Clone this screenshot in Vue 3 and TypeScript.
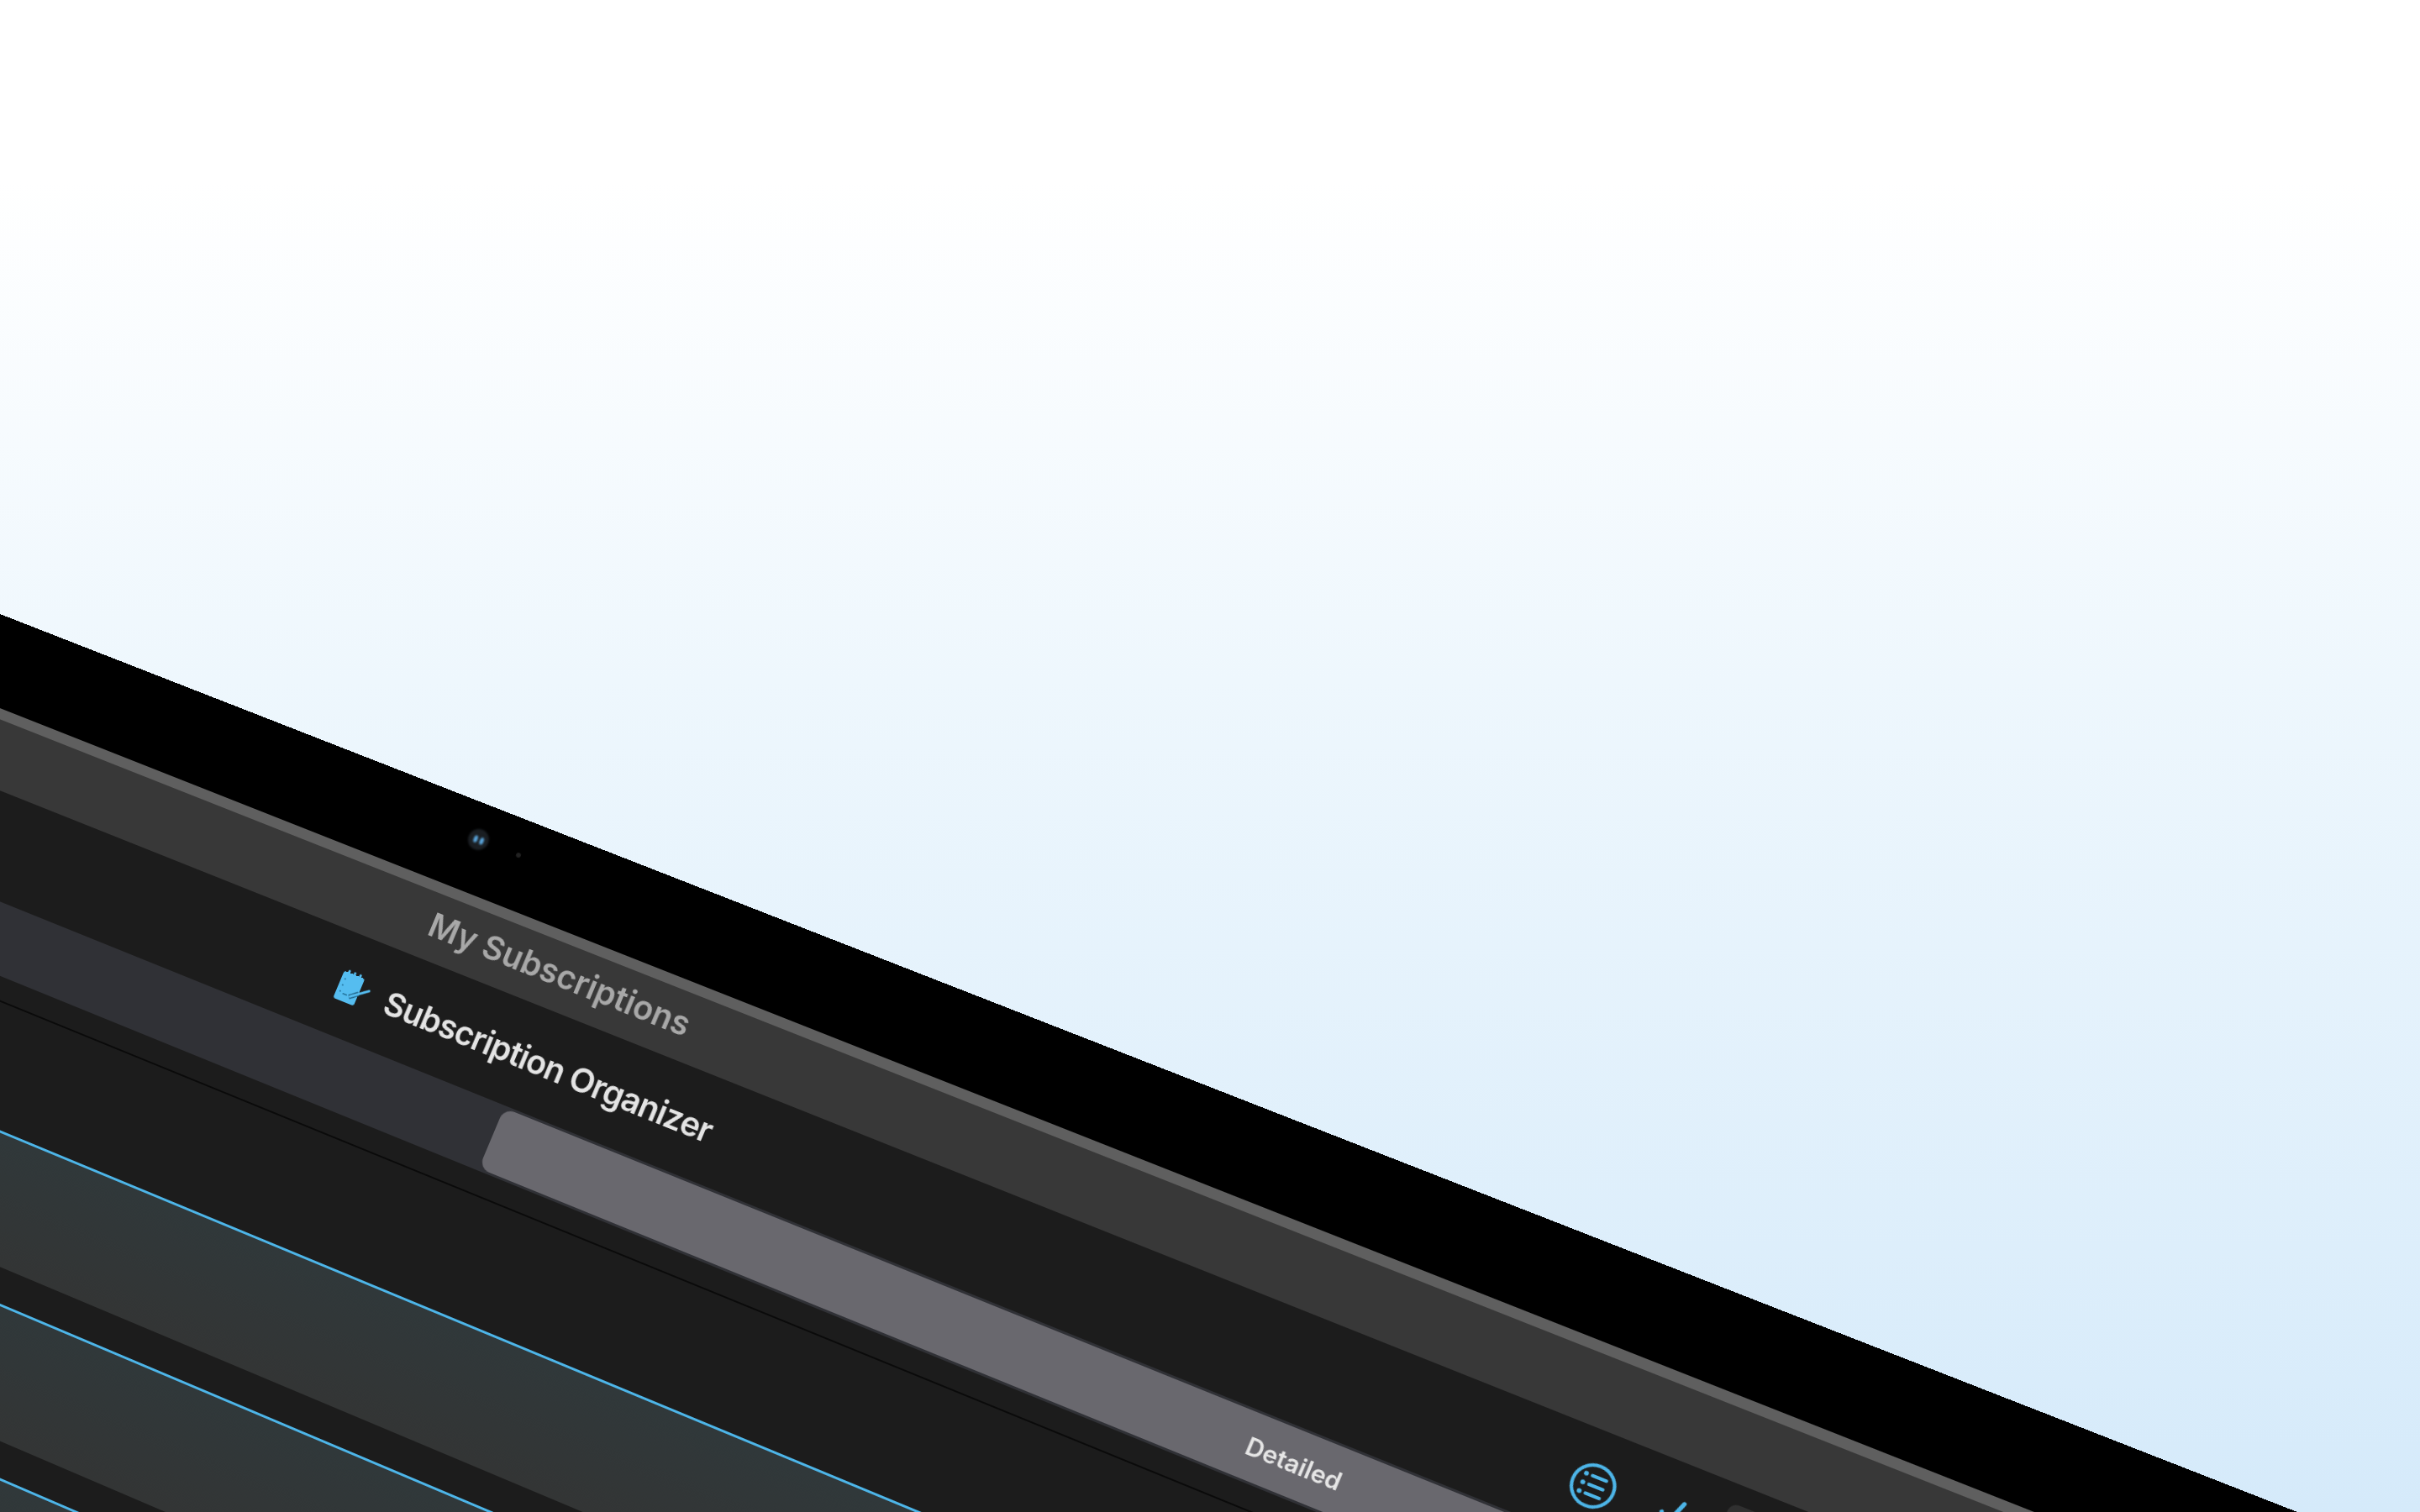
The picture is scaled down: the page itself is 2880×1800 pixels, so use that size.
<template>
  <div class="stage">
    <div class="device" :style="{ transform: deviceTransform }">
      <div class="bezel">
        <span class="camera"><i></i><i></i></span>
        <span class="sensor"></span>
      </div>
      <div class="titlebar">My Subscriptions</div>
      <header class="app-header">
        <svg class="logo" viewBox="0 0 46 46">
          <g fill="#55bdf0">
            <rect x="3" y="7" width="28" height="36" rx="3" />
            <rect x="8" y="3.5" width="3" height="6" rx="1.5" />
            <rect x="15.5" y="3.5" width="3" height="6" rx="1.5" />
            <rect x="23" y="3.5" width="3" height="6" rx="1.5" />
          </g>
          <g fill="#1f6e96">
            <circle cx="8" cy="16" r="1" />
            <circle cx="8" cy="24" r="1" />
            <circle cx="8" cy="32" r="1" />
            <rect x="12" y="33" width="6" height="1.5" />
          </g>
          <path d="M21 35l10-8" stroke="#1c5d80" stroke-width="5.5" />
          <path d="M22 34l20-15" stroke="#55bdf0" stroke-width="3" stroke-linecap="round" />
        </svg>
        <h1 class="app-name">Subscription Organizer</h1>
        <div class="actions">
          <svg class="action" viewBox="0 0 54 54" fill="none" stroke="#4db5e8" stroke-linecap="round">
            <circle cx="27" cy="27" r="24.5" stroke-width="4" />
            <path d="M22 16h17M22 27h17M22 38h17" stroke-width="4" />
            <path d="M14.5 16h.1M14.5 27h.1M14.5 38h.1" stroke-width="5.5" />
          </svg>
          <svg class="action" viewBox="0 0 54 54" fill="none" stroke="#4db5e8" stroke-linecap="round">
            <path d="M4 25l9 14L24.5 7" stroke-width="5" />
          </svg>
          <span class="action-box"></span>
        </div>
      </header>
      <div class="segments">
        <div class="segment-active">Detailed</div>
      </div>
      <div class="divider"></div>
      <div class="rows">
        <div v-for="row in rows" :key="row" class="row"></div>
      </div>
    </div>
  </div>
</template>

<script setup lang="ts">
import { computed } from 'vue'

type Point = [number, number]

const rows = [1, 2, 3, 4]

// local size of the reference rectangle and where its corners land on screen
const refW = 3436
const refH = 600
const corners: Point[] = [
  [-200, 652.8],
  [3000, 1904],
  [2754.6, 2488.3],
  [-418.5, 1173],
]

const deviceTransform = computed(() => {
  const [[x0, y0], [x1, y1], [x2, y2], [x3, y3]] = corners
  const dx1 = x1 - x2
  const dx2 = x3 - x2
  const sx = x0 - x1 + x2 - x3
  const dy1 = y1 - y2
  const dy2 = y3 - y2
  const sy = y0 - y1 + y2 - y3
  const den = dx1 * dy2 - dx2 * dy1
  const g = (sx * dy2 - dx2 * sy) / den
  const h = (dx1 * sy - sx * dy1) / den
  const a = x1 - x0 + g * x1
  const b = x3 - x0 + h * x3
  const d = y1 - y0 + g * y1
  const e = y3 - y0 + h * y3
  const m = [a / refW, d / refW, 0, g / refW, b / refH, e / refH, 0, h / refH, 0, 0, 1, 0, x0, y0, 0, 1]
  return `matrix3d(${m.join(',')})`
})
</script>

<style scoped>
.stage {
  position: relative;
  width: 2880px;
  height: 1800px;
  overflow: hidden;
  background: linear-gradient(180deg, #ffffff 12%, #eef7fd 45%, #d5eafa 100%);
  font-family: Inter, "Liberation Sans", sans-serif;
}

.device {
  position: absolute;
  left: 0;
  top: 0;
  width: 3800px;
  transform-origin: 0 0;
  background: #1c1c1c;
  display: flex;
  flex-direction: column;
}

.bezel {
  height: 123px;
  box-sizing: border-box;
  background: #000;
  border-bottom: 13px solid #5f5f5f;
  display: flex;
  align-items: center;
  padding: 0 0 22px 907px;
}

.camera {
  width: 26px;
  height: 26px;
  border-radius: 50%;
  background: #1a1e22;
  display: flex;
  align-items: center;
  justify-content: center;
  gap: 3px;
  filter: blur(0.8px);
}

.camera i {
  width: 5px;
  height: 9px;
  border-radius: 50%;
  background: #5aa5dc;
}

.sensor {
  width: 6px;
  height: 6px;
  margin-left: 38px;
  border-radius: 50%;
  background: #222;
}

.titlebar {
  height: 83px;
  background: #383838;
  color: #a8a8a8;
  font-size: 41px;
  font-weight: 600;
  line-height: 77px;
  padding-left: 905px;
  filter: blur(0.5px);
}

.app-header {
  height: 129px;
  display: flex;
  align-items: center;
  padding-left: 825px;
}

.logo {
  width: 46px;
  height: 46px;
  margin-right: 20px;
}

.app-name {
  margin: 0;
  color: #e4e4e4;
  font-size: 41px;
  font-weight: 600;
  letter-spacing: -0.95px;
  white-space: nowrap;
  filter: blur(0.5px);
}

.actions {
  display: flex;
  align-items: center;
  gap: 52px;
  margin-left: 1095px;
}

.action {
  width: 54px;
  height: 54px;
}

.action-box {
  width: 76px;
  height: 84px;
  margin-left: -34px;
  border-radius: 10px;
  background: #303030;
}

.segments {
  height: 86px;
  box-sizing: border-box;
  padding: 3px 0 3px 1080px;
  background: #303136;
}

.segment-active {
  width: 2084px;
  height: 100%;
  border-radius: 14px;
  background: #69686e;
  color: #e6e6e6;
  font-size: 29.5px;
  font-weight: 600;
  display: flex;
  align-items: center;
  justify-content: center;
}

.divider {
  height: 2px;
  margin-top: 28px;
  background: #0a0a0a;
}

.rows {
  margin-top: 148px;
  display: flex;
  flex-direction: column;
  gap: 42px;
}

.row {
  height: 154px;
  border-top: 3px solid #4db5e8;
  background: linear-gradient(180deg, #30383a, #333535);
}
</style>

<style>
body {
  margin: 0;
}
</style>
